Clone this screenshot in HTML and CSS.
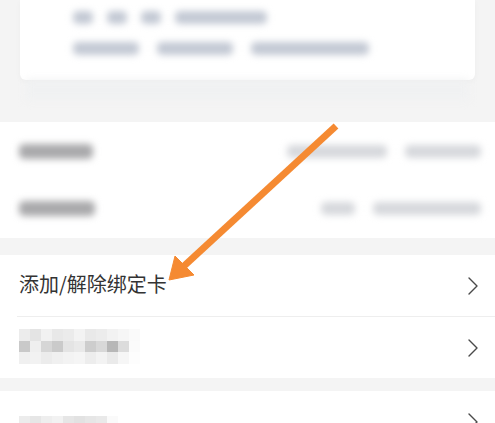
FILE: index.html
```html
<!DOCTYPE html>
<html lang="zh-CN">
<head>
<meta charset="utf-8">
<title>银行卡</title>
<link rel="stylesheet" href="styles.css">
</head>
<body>
<div class="page">
  <div class="card">
    <div class="card-line">
      <span class="blur b-blue" style="width:20px"></span>
      <span class="blur b-blue" style="width:20px"></span>
      <span class="blur b-blue" style="width:20px"></span>
      <span class="blur b-blue" style="width:92px"></span>
    </div>
    <div class="card-line">
      <span class="blur b-blue" style="width:66px"></span>
      <span class="blur b-blue" style="width:76px"></span>
      <span class="blur b-blue" style="width:118px"></span>
    </div>
  </div>
  <div class="card-foot"></div>

  <div class="section first">
    <div class="row plain">
      <span class="blur b-dark" style="width:74px"></span>
      <span class="right">
        <span class="blur b-light" style="width:100px"></span>
        <span class="blur b-light" style="width:76px"></span>
      </span>
    </div>
    <div class="row plain">
      <span class="blur b-dark" style="width:76px"></span>
      <span class="right">
        <span class="blur b-light" style="width:34px"></span>
        <span class="blur b-light" style="width:108px"></span>
      </span>
    </div>
  </div>

  <div class="section second">
    <div class="row">
      <span class="label">添加/解除绑定卡</span>
      <svg class="chev" viewBox="0 0 10 18"><polyline points="1,1 9,9 1,17"/></svg>
    </div>
    <div class="divider"></div>
    <div class="row">
      <span class="mosaic m1">
        <i style="background:#ececec"></i><i style="background:#e4e4e4"></i><i style="background:#f1f1f1"></i><i style="background:#e8e8e8"></i><i style="background:#ebebeb"></i><i style="background:#f3f3f3"></i><i style="background:#e9e9e9"></i><i style="background:#ececec"></i><i style="background:#f2f2f2"></i><i style="background:#f6f6f6"></i><i style="background:#fafafa"></i>
        <i style="background:#c9c9c9"></i><i style="background:#efefef"></i><i style="background:#d6d6d6"></i><i style="background:#cacaca"></i><i style="background:#e4e4e4"></i><i style="background:#e9e9e9"></i><i style="background:#cdcdcd"></i><i style="background:#d8d8d8"></i><i style="background:#b7b7b7"></i><i style="background:#dcdcdc"></i><i style="background:#fbfbfb"></i>
        <i style="background:#f0f0f0"></i><i style="background:#f2f2f2"></i><i style="background:#ececec"></i><i style="background:#f0f0f0"></i><i style="background:#f3f3f3"></i><i style="background:#f5f5f5"></i><i style="background:#ededed"></i><i style="background:#f3f3f3"></i><i style="background:#eaeaea"></i><i style="background:#f6f6f6"></i><i style="background:#fdfdfd"></i>
      </span>
      <svg class="chev" viewBox="0 0 10 18"><polyline points="1,1 9,9 1,17"/></svg>
    </div>
  </div>

  <div class="section third">
    <div class="row">
      <span class="mosaic m2">
        <i style="background:#ececec"></i><i style="background:#e6e6e6"></i><i style="background:#eeeeee"></i><i style="background:#f2f2f2"></i><i style="background:#e6e6e6"></i><i style="background:#e2e2e2"></i><i style="background:#e6e6e6"></i><i style="background:#e9e9e9"></i><i style="background:#fafafa"></i>
        <i style="background:#c6c6c6"></i><i style="background:#cfcfcf"></i><i style="background:#d6d6d6"></i><i style="background:#e2e2e2"></i><i style="background:#d4d4d4"></i><i style="background:#c0c0c0"></i><i style="background:#c6c6c6"></i><i style="background:#d9d9d9"></i><i style="background:#fafafa"></i>
        <i style="background:#efefef"></i><i style="background:#f0f0f0"></i><i style="background:#f1f1f1"></i><i style="background:#f3f3f3"></i><i style="background:#efefef"></i><i style="background:#ececec"></i><i style="background:#efefef"></i><i style="background:#f2f2f2"></i><i style="background:#fdfdfd"></i>
      </span>
      <svg class="chev" viewBox="0 0 10 18"><polyline points="1,1 9,9 1,17"/></svg>
    </div>
  </div>

  <svg class="arrow" viewBox="0 0 495 423">
    <line x1="336" y1="126" x2="184" y2="266"/>
    <polygon points="169,280 175,256 194,275"/>
  </svg>
</div>
</body>
</html>
```

FILE: styles.css
```css
html, body {
  margin: 0;
  padding: 0;
}
body {
  background: #f4f4f4;
  font-family: "Noto Sans CJK SC", "Noto Sans", sans-serif;
  color: #333333;
  width: 495px;
  height: 423px;
  overflow: hidden;
}
.page {
  position: relative;
  width: 495px;
  height: 423px;
  overflow: hidden;
}
.card {
  margin: 0 20px;
  height: 80px;
  background: #ffffff;
  border-radius: 0 0 6px 6px;
  box-shadow: 0 2px 6px rgba(0, 0, 0, 0.03);
  padding: 10px 0 0 53px;
  box-sizing: border-box;
  display: flex;
  flex-direction: column;
  gap: 17px;
}
.card-line {
  display: flex;
  gap: 14px;
  height: 14px;
  align-items: center;
}
.card-line + .card-line {
  gap: 18px;
}
.card-foot {
  margin: 0 26px;
  height: 20px;
  background: #f0f1f2;
  filter: blur(4px);
}
.blur {
  display: inline-block;
  height: 12px;
  border-radius: 5px;
  filter: blur(3.5px);
}
.b-blue { background: #c3c9d4; height: 13px; }
.b-dark { background: #a9a9ab; height: 15px; }
.b-light { background: #d6d8dc; height: 13px; }
.section {
  background: #ffffff;
}
.section.first {
  margin-top: 22px;
  padding: 1px 0;
}
.section.second {
  margin-top: 17px;
}
.section.third {
  margin-top: 13px;
}
.row {
  height: 61px;
  display: flex;
  align-items: center;
  justify-content: space-between;
  padding: 0 17px 0 19px;
}
.row.plain {
  height: 57px;
  padding-right: 14px;
}
.right {
  display: flex;
  gap: 18px;
  align-items: center;
}
.label {
  font-size: 20px;
  line-height: 1;
  color: #333333;
  margin-top: -3px;
}
.divider {
  height: 1px;
  background: #eeeeee;
  margin-left: 17px;
}
.chev {
  width: 10px;
  height: 18px;
  flex: none;
}
.chev polyline {
  fill: none;
  stroke: #4a4a4a;
  stroke-width: 1.4;
  stroke-linecap: round;
  stroke-linejoin: round;
}
.mosaic {
  display: grid;
  grid-auto-rows: 11.5px;
  filter: blur(0.6px);
  margin-top: -2px;
}
.mosaic i {
  display: block;
}
.m1 {
  grid-template-columns: repeat(11, 11px);
}
.m2 {
  grid-template-columns: repeat(9, 11px);
  margin-top: 24px;
}
.arrow {
  position: absolute;
  left: 0;
  top: 0;
  width: 495px;
  height: 423px;
  pointer-events: none;
}
.arrow line {
  stroke: #f58a32;
  stroke-width: 7;
  stroke-linecap: butt;
}
.arrow polygon {
  fill: #f58a32;
  stroke: #f58a32;
  stroke-width: 1;
  stroke-linejoin: round;
}
```
